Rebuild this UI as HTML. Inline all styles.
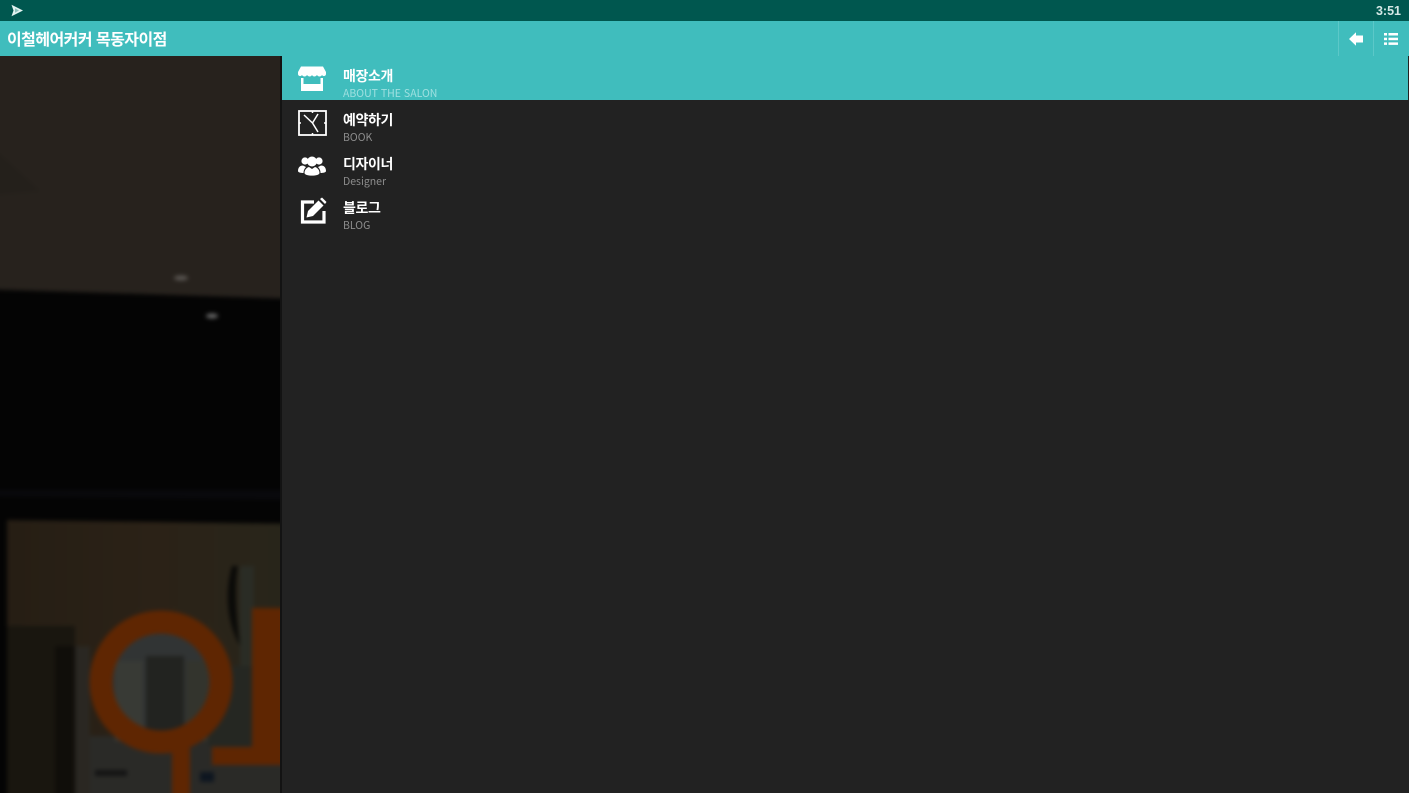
<!DOCTYPE html>
<html lang="ko"><head><meta charset="utf-8"><style>
*{margin:0;padding:0;box-sizing:border-box}
html,body{width:1409px;height:793px;overflow:hidden;background:#222;font-family:"Noto Sans CJK KR","Liberation Sans",sans-serif}
.abs{position:absolute}
#status{left:0;top:0;width:1409px;height:21px;background:#00574f}
#time{right:8px;top:3px;font:bold 12.5px/17px "Liberation Sans",sans-serif;color:#d5e8e6}
#bar{left:0;top:21px;width:1409px;height:35px;background:#40bdbd}
#title{left:7px;top:6px;font-size:16px;line-height:23px;font-weight:700;color:#fff;letter-spacing:-.55px;white-space:nowrap}
.sep{top:0;width:1px;height:35px;background:#5cc8c8}
#pic{left:0;top:56px;width:280px;height:737px;overflow:hidden;background:#040404}
#pic svg{position:absolute;left:-20px;top:-20px;filter:blur(2px)}
#edge{left:280px;top:56px;width:2px;height:737px;background:#131313}
#panel{left:282px;top:56px;width:1127px;height:737px;background:#222}
.row{left:282px;width:1127px;height:44px}
.on{background:#40bdbd;width:1126px}
.k{left:61px;top:10px;font-size:14px;line-height:20px;font-weight:700;color:#fff;letter-spacing:-.4px;white-space:nowrap}
.e{left:61px;top:30px;font-size:10.5px;line-height:16px;color:#8d8d8d;white-space:nowrap}
.on .e{color:#9fe0e0}
.row svg{position:absolute;left:15px;top:8px}
</style></head><body>
<div id="status" class="abs">
<svg class="abs" style="left:10px;top:4px" width="14" height="13" viewBox="0 0 14 13"><path d="M1.500 .8L13 6.500L1.500 12.200L3.500 6.500Z" fill="#e2f3f1"/><path d="M5 4.300L9 6.500L5 8.700Z" fill="#8cc0bb"/></svg>
<div id="time" class="abs">3:51</div></div>
<div id="bar" class="abs">
<div id="title" class="abs">이철헤어커커 목동자이점</div>
<div class="abs sep" style="left:1338px"></div><div class="abs sep" style="left:1373px"></div>
<svg class="abs" style="left:1348px;top:11px" width="16" height="14" viewBox="0 0 16 14"><path d="M1 7L8 .3V3.500H15V10.500H8V13.700Z" fill="#fff"/></svg>
<svg class="abs" style="left:1383px;top:11px" width="16" height="14" viewBox="0 0 16 14" fill="#fff"><rect x="1" y="1" width="3" height="2.500"/><rect x="5.500" y="1" width="9.500" height="2.500"/><rect x="1" y="5.700" width="3" height="2.500"/><rect x="5.500" y="5.700" width="9.500" height="2.500"/><rect x="1" y="10.400" width="3" height="2.500"/><rect x="5.500" y="10.400" width="9.500" height="2.500"/></svg>
</div>
<div id="pic" class="abs">
<svg width="320" height="777" viewBox="-20 -20 320 777">
<defs><linearGradient id="w" x1="0" y1="0" x2="1" y2="0"><stop offset="0" stop-color="#261e14"/><stop offset=".5" stop-color="#2b2217"/><stop offset="1" stop-color="#28261b"/></linearGradient></defs>
<rect x="-20" y="-20" width="320" height="777" fill="#040404"/>
<path d="M-20 -20H300V243L-20 233Z" fill="#27221d"/>
<path d="M-20 80L40 135L-20 140Z" fill="#24201b"/>
<path d="M-20 434H300V444L-20 440Z" fill="#09090c"/>
<path d="M7 464L300 468V757H7Z" fill="url(#w)"/>
<rect x="7" y="570" width="68" height="187" fill="#19160f"/>
<rect x="55" y="590" width="20" height="167" fill="#100e0a"/>
<rect x="75" y="590" width="15" height="167" fill="#2a2722"/>
<rect x="90" y="680" width="210" height="77" fill="#2a2a27"/>
<path d="M232 510C225 535 226 565 240 590C236 560 234 530 238 510Z" fill="#0a0a08"/>
<path d="M240 510H254V620H240Z" fill="#2a2c25"/>
<rect x="208" y="610" width="44" height="80" fill="#252722"/>
<circle cx="161" cy="626" r="60" fill="#313434"/>
<rect x="146" y="600" width="38" height="85" fill="#222320"/>
<rect x="115" y="605" width="28" height="80" fill="#383a35"/>
<rect x="186" y="605" width="22" height="80" fill="#33342d"/>
<rect x="95" y="714" width="32" height="6" fill="#141414"/>
<rect x="200" y="716" width="14" height="10" fill="#0e1620"/>
<circle cx="161" cy="626" r="60" fill="none" stroke="#5f2602" stroke-width="23"/>
<path d="M172 690H190V757H172Z" fill="#5f2602"/>
<path d="M212 691H300V709H212Z" fill="#5f2602"/>
<path d="M252 552H300V700H252Z" fill="#5f2602"/>
<ellipse cx="181" cy="222" rx="7" ry="2.500" fill="#5a5652"/><ellipse cx="212" cy="260" rx="6" ry="2.500" fill="#666"/>
</svg></div>
<div id="edge" class="abs"></div>
<div id="panel" class="abs"></div>

<div class="abs row on" style="top:56px">
<svg width="30" height="28" viewBox="0 0 30 28"><path d="M4 2.500H26L29 8V10C29 12 26.500 13 25 11C24 13 21 13 20 11C18.500 13 16 13 15 11C14 13 11.500 13 10 11C9 13 6 13 5 11C3.500 13 1 12 1 10V8Z" fill="#fff"/><path d="M4 14V27H26V14H23.500V20H6.500V14Z" fill="#fff"/></svg>
<div class="abs k">매장소개</div><div class="abs e">ABOUT THE SALON</div></div>

<div class="abs row" style="top:100px">
<svg width="32" height="28" viewBox="0 0 32 28" fill="none" stroke="#fff"><rect x="2" y="3" width="27" height="24" stroke-width="1.800"/><path d="M7 7L15.500 15L21 6M15.500 15L21 24" stroke-width="1.500"/><path d="M15.500 3V5M15.500 25V27M2 15H4M27 15H29" stroke-width="1.500"/></svg>
<div class="abs k">예약하기</div><div class="abs e">BOOK</div></div>

<div class="abs row" style="top:144px">
<svg width="30" height="28" viewBox="0 0 30 28" fill="#fff"><circle cx="8" cy="9" r="3.600"/><circle cx="22" cy="9" r="3.600"/><path d="M1 19C1 15 3.500 13.500 6 13.500L9 15C7 17 6.500 19 6.500 21C4 21 1 20.500 1 19Z"/><path d="M29 19C29 15 26.500 13.500 24 13.500L21 15C23 17 23.500 19 23.500 21C26 21 29 20.500 29 19Z"/><circle cx="15" cy="9.500" r="5"/><path d="M7.500 21C7.500 17.500 10 15.500 12 15L15 17L18 15C20 15.500 22.500 17.500 22.500 21C22.500 24.500 7.500 24.500 7.500 21Z"/></svg>
<div class="abs k">디자이너</div><div class="abs e">Designer</div></div>

<div class="abs row" style="top:188px">
<svg width="32" height="30" viewBox="0 0 32 30"><path d="M17 6H5.500V26H27V15" fill="none" stroke="#fff" stroke-width="3.200"/><path d="M9.500 21.500L11 15L21.500 4.500L26.500 9.500L16 20Z" fill="#fff"/><path d="M23 3L25 1.500L29.500 6L28 8Z" fill="#fff"/></svg>
<div class="abs k">블로그</div><div class="abs e">BLOG</div></div>
</body></html>
